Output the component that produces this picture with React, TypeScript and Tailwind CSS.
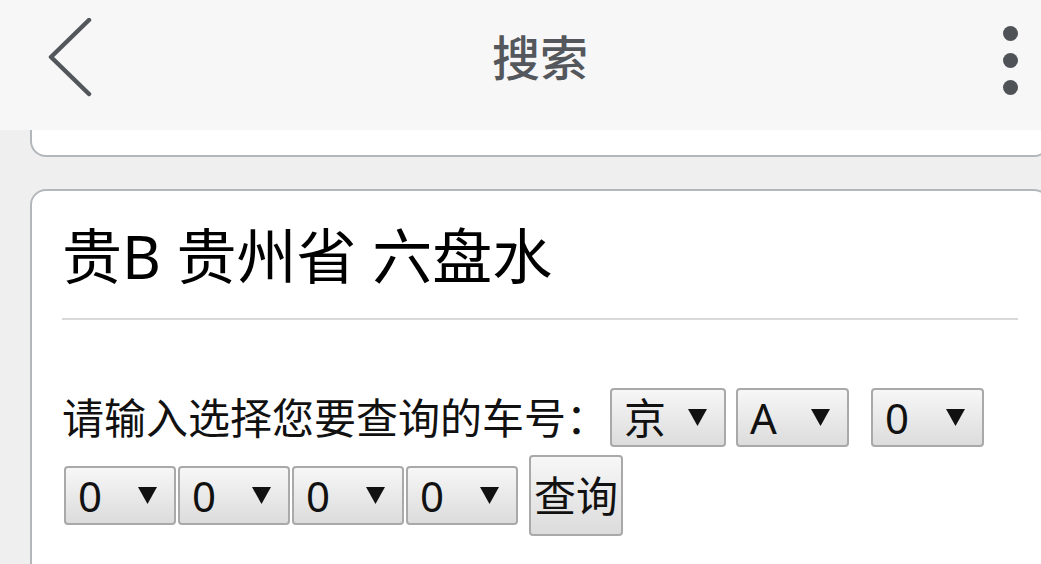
const FONT = "font-['Noto_Sans','Noto_Sans_CJK_SC',sans-serif]";

function Caret() {
  return (
    <svg width="19" height="17" viewBox="0 0 19 17" className="shrink-0">
      <path d="M0 0 H19 L9.5 17 Z" fill="#111" />
    </svg>
  );
}

function PlateSelect({ value, className = "" }: { value: string; className?: string }) {
  return (
    <div
      className={`flex h-[59px] items-center justify-between rounded-[4px] border-2 border-[#a9a9a9] bg-gradient-to-b from-[#f7f7f7] to-[#dcdcdc] pl-[12px] pr-[17px] text-[42px] leading-none text-[#111] ${className}`}
    >
      <span>{value}</span>
      <Caret />
    </div>
  );
}

export default function App() {
  return (
    <div className={`h-[564px] w-[1041px] overflow-hidden bg-[#efefef] ${FONT}`}>
      <div className="w-[1080px]">
        {/* Top bar */}
        <div className="grid h-[130px] grid-cols-[1fr_auto_1fr] items-center bg-[#f7f7f7] px-[48px] pb-[14px]">
          <svg width="46" height="80" viewBox="0 0 46 80">
            <path
              d="M41 2 L3 39 L41 76"
              fill="none"
              stroke="#53575c"
              strokeWidth="4.5"
              strokeLinecap="round"
              strokeLinejoin="round"
            />
          </svg>
          <div className="text-[48px] font-medium leading-none text-[#54575b]">搜索</div>
          <div className="mr-[14px] mt-[4px] flex flex-col gap-[12px] justify-self-end">
            <span className="h-[15px] w-[15px] rounded-full bg-[#4f5358]" />
            <span className="h-[15px] w-[15px] rounded-full bg-[#4f5358]" />
            <span className="h-[15px] w-[15px] rounded-full bg-[#4f5358]" />
          </div>
        </div>

        {/* Previous card, scrolled mostly out of view */}
        <div className="mx-[30px] h-[27px] rounded-b-[16px] border-2 border-t-0 border-[#b3b7bb] bg-white" />

        {/* Search card */}
        <div className="mx-[30px] mt-[32px] rounded-[16px] border-2 border-[#b3b7bb] bg-white px-[30px] pb-[40px] pt-[29px]">
          <h1 className="text-[60px] font-normal leading-[72px] text-black">贵B 贵州省 六盘水</h1>
          <div className="mt-[26px] h-[2px] bg-[#d9d9d9]" />

          <div className="mt-[68px] flex items-center">
            <span className="text-[42px] leading-[59px] text-[#111]">请输入选择您要查询的车号：</span>
            <PlateSelect value="京" className="ml-[2px] w-[116px]" />
            <PlateSelect value="A" className="ml-[10px] w-[113px]" />
            <PlateSelect value="0" className="ml-[22px] w-[113px]" />
          </div>

          <div className="mt-[8px] flex items-center">
            <PlateSelect value="0" className="ml-[2px] w-[112px]" />
            <PlateSelect value="0" className="ml-[2px] w-[112px]" />
            <PlateSelect value="0" className="ml-[2px] w-[112px]" />
            <PlateSelect value="0" className="ml-[2px] w-[112px]" />
            <button className="ml-[11px] flex h-[81px] w-[94px] items-center justify-center rounded-[4px] border-2 border-[#a9a9a9] bg-gradient-to-b from-[#f7f7f7] to-[#dcdcdc] text-[42px] leading-none text-[#111]">
              查询
            </button>
          </div>
        </div>
      </div>
    </div>
  );
}
